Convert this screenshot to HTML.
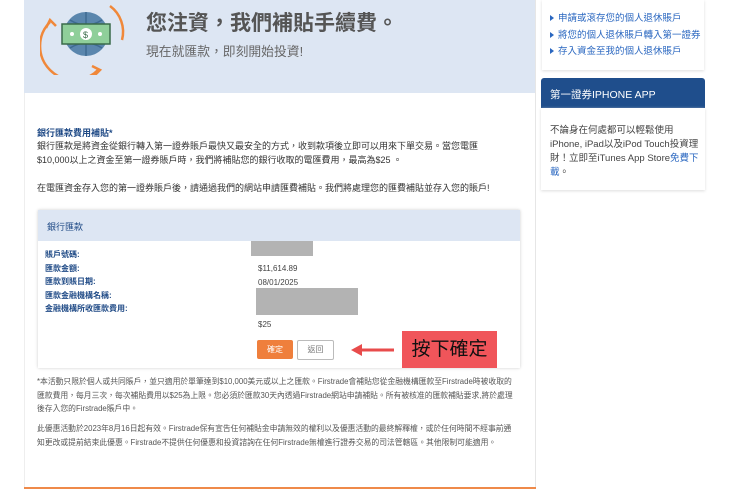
<!DOCTYPE html>
<html><head><meta charset="utf-8"><style>
body{margin:0;width:740px;height:493px;background:#fff;font-family:"Liberation Sans","Noto Sans CJK TC",sans-serif;position:relative;overflow:hidden;color:#444}
.a{position:absolute;white-space:nowrap}
.main{position:absolute;left:24px;top:0;width:510px;height:487px;background:#fff;border-right:1px solid #e6e6e6;border-left:1px solid #eee}
.hero{position:absolute;left:24px;top:0;width:511px;height:93px;background:#dde6f3}
.lbl{font-size:8px;color:#1f4a86;font-weight:bold}
.val{font-size:8px;color:#444}
.s{font-size:9px;color:#333;line-height:14px}
.f{font-size:7.8px;color:#555;line-height:13.5px}
.lk{font-size:9.5px;color:#2a67c0}
.tri{display:inline-block;width:0;height:0;border-left:4px solid #2a67c0;border-top:3px solid transparent;border-bottom:3px solid transparent;margin-right:4px}
</style></head><body>
<div class="main"></div>
<div class="hero"></div>
<svg class="a" style="left:40px;top:0" width="86" height="75" viewBox="0 0 86 75">
<path d="M10 22 A32 32 0 0 0 58 70" fill="none" stroke="#f0883a" stroke-width="2.5"/>
<path d="M52 66 L60 70 L54 76" fill="none" stroke="#f0883a" stroke-width="2.5"/>
<path d="M82 40 A32 32 0 0 0 70 6" fill="none" stroke="#f0883a" stroke-width="2.5"/>
<path d="M6 28 L10 20 L16 26" fill="none" stroke="#f0883a" stroke-width="2.5"/>
<circle cx="46" cy="34" r="22" fill="#5a86ad"/>
<path d="M24 34h44M46 12v44M30 20q16 10 32 0M30 48q16-10 32 0" stroke="#3e6a91" stroke-width="1.5" fill="none"/>
<rect x="22" y="24" width="48" height="20" fill="#8fcf9a" stroke="#3a6a4a" stroke-width="1.5"/>
<circle cx="46" cy="34" r="6" fill="#fff"/><text x="43" y="38" font-size="9" fill="#3a6a4a">$</text>
<circle cx="32" cy="34" r="2" fill="#fff"/><circle cx="60" cy="34" r="2" fill="#fff"/>
</svg>
<div class="a" style="left:146px;top:7px;font-size:21px;color:#555;font-weight:bold">您注資，我們補貼手續費。</div>
<div class="a" style="left:146px;top:41px;font-size:12.8px;color:#666">現在就匯款，即刻開始投資!</div>
<div class="a" style="left:37px;top:126px;font-size:9px;color:#1f4a86;font-weight:bold">銀行匯款費用補貼*</div>
<div class="a s" style="left:37px;top:139px">銀行匯款是將資金從銀行轉入第一證券賬戶最快又最安全的方式，收到款項後立即可以用來下單交易。當您電匯<br>$10,000以上之資金至第一證券賬戶時，我們將補貼您的銀行收取的電匯費用，最高為$25 。</div>
<div class="a s" style="left:37px;top:181px">在電匯資金存入您的第一證券賬戶後，請通過我們的網站申請匯費補貼。我們將處理您的匯費補貼並存入您的賬戶!</div>
<div class="a" style="left:38px;top:210px;width:482px;height:158px;box-shadow:0 0 3px #ccc;background:#fff"></div>
<div class="a" style="left:38px;top:210px;width:482px;height:31px;background:#dde6f3"></div>
<div class="a" style="left:47px;top:220px;font-size:9px;color:#1f4a86">銀行匯款</div>
<div class="a lbl" style="left:45px;top:248px;line-height:13.6px">賬戶號碼:<br>匯款金額:<br>匯款到賬日期:<br>匯款金融機構名稱:<br>金融機構所收匯款費用:</div>
<div class="a" style="left:251px;top:241px;width:62px;height:15px;background:#b3b3b3"></div>
<div class="a" style="left:256px;top:288px;width:102px;height:27px;background:#b3b3b3"></div>
<div class="a val" style="left:258px;top:262px;line-height:13.6px">$11,614.89<br>08/01/2025</div>
<div class="a val" style="left:258px;top:320px">$25</div>
<div class="a" style="left:257px;top:340px;width:36px;height:19px;background:#ef7f3c;border-radius:2px;color:#fff;font-size:8px;text-align:center;line-height:19px">確定</div>
<div class="a" style="left:297px;top:340px;width:35px;height:18px;border:1px solid #bbb;border-radius:2px;color:#777;font-size:8px;text-align:center;line-height:18px">返回</div>
<svg class="a" style="left:350px;top:343px" width="45" height="14"><path d="M44 7H10" stroke="#e84b4b" stroke-width="3"/><path d="M12 1L1 7L12 13Z" fill="#e84b4b"/></svg>
<div class="a" style="left:402px;top:331px;width:95px;height:37px;background:#f0555a;color:#111;font-size:19px;text-align:center;line-height:37px">按下確定</div>
<div class="a f" style="left:37px;top:375px">*本活動只限於個人或共同賬戶，並只適用於單筆達到$10,000美元或以上之匯款。Firstrade會補貼您從金融機構匯款至Firstrade時被收取的<br>匯款費用，每月三次，每次補貼費用以$25為上限。您必須於匯款30天內透過Firstrade網站申請補貼。所有被核准的匯款補貼要求,將於處理<br>後存入您的Firstrade賬戶中。</div>
<div class="a f" style="left:37px;top:422px">此優惠活動於2023年8月16日起有效。Firstrade保有宣告任何補貼金申請無效的權利以及優惠活動的最終解釋權，或於任何時間不經事前通<br>知更改或提前結束此優惠。Firstrade不提供任何優惠和投資諮詢在任何Firstrade無權進行證券交易的司法管轄區。其他限制可能適用。</div>
<div class="a" style="left:24px;top:487px;width:512px;height:2px;background:#ef8a4a"></div>
<div class="a" style="left:542px;top:0;width:162px;height:70px;background:#fff;box-shadow:0 1px 3px #ddd"></div>
<div class="a lk" style="left:550px;top:11px;line-height:16.5px"><span class="tri"></span>申請或滾存您的個人退休賬戶<br><span class="tri"></span>將您的個人退休賬戶轉入第一證券<br><span class="tri"></span>存入資金至我的個人退休賬戶</div>
<div class="a" style="left:541px;top:78px;width:164px;height:30px;background:#1f4e8c;border-radius:3px 3px 0 0"></div>
<div class="a" style="left:550px;top:87px;font-size:10.5px;color:#fff">第一證券IPHONE APP</div>
<div class="a" style="left:541px;top:108px;width:164px;height:82px;background:#fff;box-shadow:0 1px 3px #ddd"></div>
<div class="a" style="left:550px;top:124px;font-size:9.5px;color:#444;line-height:14px">不論身在何處都可以輕鬆使用<br>iPhone, iPad以及iPod Touch投資理<br>財！立即至iTunes App Store<span style="color:#2a67c0">免費下</span><br><span style="color:#2a67c0">載</span>。</div>
</body></html>
